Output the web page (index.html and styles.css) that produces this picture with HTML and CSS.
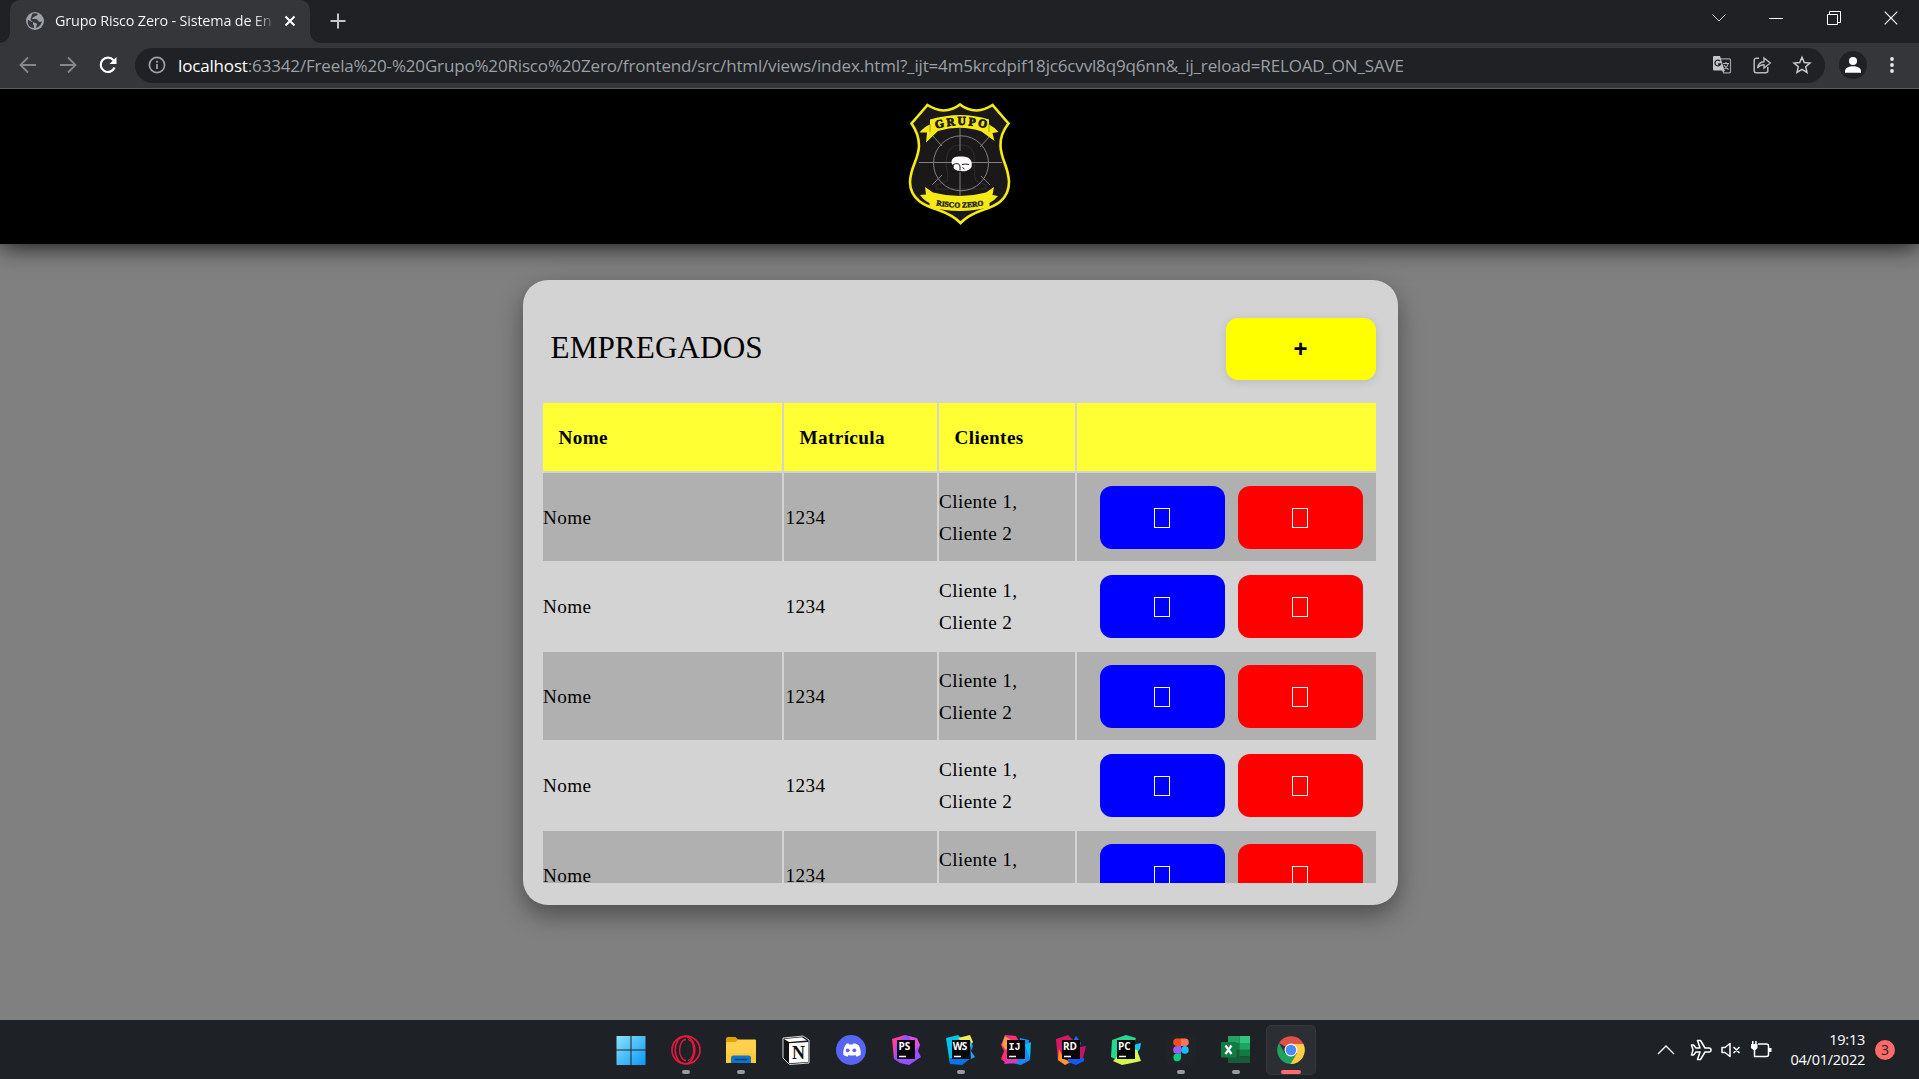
FILE: index.html
```html
<!DOCTYPE html>
<html lang="pt-BR">
<head>
<meta charset="utf-8">
<title>Grupo Risco Zero - Sistema de Empregados</title>
<link rel="stylesheet" href="styles.css">
</head>
<body>
<div class="screen">
  <div class="tabstrip">
    <div class="tab">
      <svg class="globe" width="18" height="18" viewBox="0 0 18 18"><circle cx="9" cy="9" r="9" fill="#9aa0a6"/><path d="M2 8c2 0 2 2 5 2v2c0 1 1 1 1 2v2C4 16 1 13 2 8zM6 2c2-1 4-1 6 0-1 1-1 2-3 2-1 2-3 1-3 3h4c2 0 2 3 4 3 1 0 2-1 2-1-1 4-3 6-6 7 0-2 1-2 1-4-1-2-5-1-6-4C4 6 6 5 6 2z" fill="#35363a"/></svg>
      <span class="tab-title">Grupo Risco Zero - Sistema de En</span>
      <svg class="tab-close" width="12" height="12" viewBox="0 0 12 12"><path d="M1.5 1.5l9 9M10.500 1.500l-9 9" stroke="#fff" stroke-width="2"/></svg>
    </div>
    <svg class="new-tab" width="16" height="16" viewBox="0 0 16 16"><path d="M8 .5v15M.5 8h15" stroke="#c4c7ca" stroke-width="2"/></svg>
    <div class="window-buttons">
      <svg width="14" height="14" viewBox="0 0 14 14"><path d="M.5 3.500l6.500 6.500 6.500-6.500" fill="none" stroke="#d0d0d0"/></svg>
      <svg width="14" height="14" viewBox="0 0 14 14"><path d="M0 7.500h14" stroke="#fff"/></svg>
      <svg width="14" height="14" viewBox="0 0 14 14"><path d="M.5 3.500h10v10h-10zM2.500 3V.5h11v11H11" fill="none" stroke="#fff"/></svg>
      <svg width="14" height="14" viewBox="0 0 14 14"><path d="M.7.7l12.600 12.600M13.300.7L.7 13.300" stroke="#fff" stroke-width="1.200"/></svg>
    </div>
  </div>
  <div class="toolbar">
    <div class="nav">
      <svg width="18" height="18" viewBox="0 0 18 18"><path d="M17 9H2M9 1.500L1.500 9 9 16.500" fill="none" stroke="#85878a" stroke-width="1.800"/></svg>
      <svg width="18" height="18" viewBox="0 0 18 18"><path d="M1 9h15M9 1.500L16.500 9 9 16.500" fill="none" stroke="#85878a" stroke-width="1.800"/></svg>
      <svg width="18" height="18" viewBox="0 0 18 18"><path d="M15.600 11.500A7.200 7.200 0 1 1 14.500 4.200" fill="none" stroke="#fff" stroke-width="2.200"/><path d="M17.500 1v7h-7z" fill="#fff"/></svg>
    </div>
    <div class="omnibox">
      <svg width="18" height="18" viewBox="0 0 18 18"><circle cx="9" cy="9" r="7.600" fill="none" stroke="#9aa0a6" stroke-width="1.700"/><path d="M9 8v5M9 4.800v2" stroke="#9aa0a6" stroke-width="1.800"/></svg>
      <span class="url"><b>localhost</b>:63342/Freela%20-%20Grupo%20Risco%20Zero/frontend/src/html/views/index.html?_ijt=4m5krcdpif18jc6cvvl8q9q6nn&amp;_ij_reload=RELOAD_ON_SAVE</span>
      <div class="page-actions">
        <svg width="20" height="20" viewBox="0 0 20 20"><path d="M8 3.800h9.500a1 1 0 0 1 1 1v12a1 1 0 0 1-1 1H11" fill="none" stroke="#9aa0a6" stroke-width="1.200"/><path d="M2 1h6l4.500 14.500H2a1 1 0 0 1-1-1V2a1 1 0 0 1 1-1z" fill="#c3c5c8"/><path d="M11 18l-1-3h3z" fill="#c3c5c8"/><path d="M8 6A2.900 2.900 0 1 0 8.600 9H6" fill="none" stroke="#202124" stroke-width="1.300"/><path d="M11 8.500h6M14 7v1.500M16 9c-.5 2.500-2 4-3.500 5M12 10c1 2 3 3.500 4.500 4.500" fill="none" stroke="#b7babd" stroke-width="1.100"/></svg>
        <svg width="20" height="20" viewBox="0 0 20 20"><path d="M7 3.200H4.200a2 2 0 0 0-2 2v10.600a2 2 0 0 0 2 2h9.600a2 2 0 0 0 2-2V12" fill="none" stroke="#b7babd" stroke-width="1.500"/><path d="M5.500 13c.5-4 2.700-6 6.500-6.300V3l6.300 5-6.300 5V9.700C9 9.700 7 10.800 5.500 13z" fill="none" stroke="#b7babd" stroke-width="1.400"/></svg>
        <svg width="20" height="20" viewBox="0 0 20 20"><path d="M10 2.300l2.300 5.200 5.700.5-4.300 3.800 1.300 5.600-5-3-5 3 1.300-5.600L2 8l5.700-.5z" fill="none" stroke="#c8cacc" stroke-width="1.500"/></svg>
      </div>
    </div>
    <svg class="avatar" width="28" height="28" viewBox="0 0 28 28"><circle cx="14" cy="14" r="14" fill="#202124"/><circle cx="14" cy="10" r="4" fill="#fff"/><path d="M6 21.800v-1.500c0-3.600 4-5 8-5s8 1.400 8 5v1.500z" fill="#fff"/></svg>
    <svg class="menu" width="4" height="18" viewBox="0 0 4 18"><circle cx="2" cy="3" r="1.900" fill="#e8eaed"/><circle cx="2" cy="9" r="1.900" fill="#e8eaed"/><circle cx="2" cy="15" r="1.900" fill="#e8eaed"/></svg>
  </div>

  <main class="page">
    <header class="site-header">
      <svg class="logo" width="140" height="150" viewBox="0 0 140 150">
        <defs>
          <path id="arc-top" d="M46 39Q71 31 99 39"/>
          <path id="arc-bottom" d="M42 114.500Q70 120.500 98 114.500"/>
        </defs>
        <path d="M37.500 15q8 5 16 5.500Q63 20 70 14.500q7 5.500 16.500 6Q95 20 102.500 15L118.500 33.500Q110 44 110.500 56C111 70 118.500 76 119 92c0 18-14 24-25 27.500-10 3.500-18 7.500-23.500 13.500C65 127 57 123 47 119.500 36 116 20 110 20 92c.5-16 8.500-22 9-36Q29 44 21.500 33.500z" fill="#1a1819" stroke="#f5ea14" stroke-width="2.600"/>
        <path d="M57 91c3-8-3-13 0-25 2-9 8-11 14-11s12 2 13 11c1 10-1 17 2 25l10 4v4H46v-4z" fill="none" stroke="#353435" stroke-width=".8"/>
        <g fill="none" stroke="#8b8b8b" stroke-width=".9"><circle cx="71" cy="73.300" r="27.500"/><path d="M29 72.500h83M70 38v23M70 82v27M42 45l10 11M100 46L90 57M42 95l10-10M100 95l-9-9"/></g>
        <path d="M29.500 42.500q5-6 10.500-8v-5q31-9 59 0v5q6 3 9.500 7.500l-6 1 2 8-13-9.500q-21-7-43.500-.5L36 52.500l1-10z" fill="#f5ea14"/>
        <path d="M40 34v8M99 34v8M40 105v8M99 105v8" stroke="#7c7617" stroke-width=".7"/>
        <path d="M35 97l8 5.500q27 7 53 0l8-5.500-1.500 8 5.500 1q-4 5-8.500 7v4q-30 8-60 0v-4q-5-2-9.500-8l6-.5z" fill="#f5ea14"/>
        <text class="logo-grupo"><textPath href="#arc-top" textLength="51" lengthAdjust="spacing">GRUPO</textPath></text>
        <text class="logo-risco"><textPath href="#arc-bottom" startOffset="4" textLength="48" lengthAdjust="spacingAndGlyphs">RISCO ZERO</textPath></text>
        <path d="M61.500 72c0-3 2-5 5-5.300 5-.6 9-.2 12 1 3 2 3.700 5 3.200 8.500-.5 2.500-3 4-6 4.800q-3 .8-5-.2c-3 .3-6-.8-7.200-2.800l.5-2.500-2-1z" fill="#fff"/>
        <path d="M62.500 75q3-2 6-1.200l1.500 2.200v4M72 74.500q4-1 7 0M72.500 77.500l2 1.500" fill="none" stroke="#1a1819" stroke-width="1"/>
      </svg>
    </header>

    <section class="card">
      <div class="card-head">
        <h1>EMPREGADOS</h1>
        <button class="add">+</button>
      </div>
      <div class="grid">
        <div class="row head"><div>Nome</div><div>Matrícula</div><div>Clientes</div><div></div></div>
        <div class="row"><div>Nome</div><div class="id">1234</div><div>Cliente 1,<br>Cliente 2</div><div class="actions"><button class="edit"><i></i></button><button class="delete"><i></i></button></div></div>
        <div class="row"><div>Nome</div><div class="id">1234</div><div>Cliente 1,<br>Cliente 2</div><div class="actions"><button class="edit"><i></i></button><button class="delete"><i></i></button></div></div>
        <div class="row"><div>Nome</div><div class="id">1234</div><div>Cliente 1,<br>Cliente 2</div><div class="actions"><button class="edit"><i></i></button><button class="delete"><i></i></button></div></div>
        <div class="row"><div>Nome</div><div class="id">1234</div><div>Cliente 1,<br>Cliente 2</div><div class="actions"><button class="edit"><i></i></button><button class="delete"><i></i></button></div></div>
        <div class="row"><div>Nome</div><div class="id">1234</div><div>Cliente 1,<br>Cliente 2</div><div class="actions"><button class="edit"><i></i></button><button class="delete"><i></i></button></div></div>
      </div>
    </section>
  </main>

  <footer class="taskbar">
    <div class="apps">
      <div class="app"><svg viewBox="0 0 30 30"><defs><linearGradient id="win" x2="1" y2="1"><stop stop-color="#8be3fc"/><stop offset="1" stop-color="#0b97f5"/></linearGradient></defs><path d="M.5 1h14v13.500H.5zM15.500 1h14v13.500h-14zM.5 15.500h14V30H.5zM15.500 15.500h14V30h-14z" fill="url(#win)"/></svg></div>
      <div class="app open"><svg viewBox="0 0 30 30"><g fill="none" stroke="#e8173f"><circle cx="15" cy="15" r="14" stroke-width="1.700"/><ellipse cx="14" cy="15" rx="9.800" ry="13.600" stroke-width="1.500"/><path d="M15 4.500C6.500 5 6.500 25 15 25.500" stroke-width="1.300"/><path d="M17 4.500c7 2 8 18 0 21" stroke-width="1.300"/></g></svg></div>
      <div class="app open"><svg viewBox="0 0 30 30"><path d="M0 4a2 2 0 0 1 2-2h7.500l3 3-2 5H0z" fill="#e3a100"/><path d="M0 7h9.500l2.500-2.500h17a1 1 0 0 1 1 1V28H0z" fill="#ffd04c"/><path d="M0 18h30v10H0z" fill="#ffc52f" opacity=".6"/><path d="M5 28v-5a2.500 2.500 0 0 1 2.500-2.500h15A2.500 2.500 0 0 1 25 23v5z" fill="#0c76cb"/><path d="M9 24.500h12" stroke="#073e73" stroke-width="1.300" stroke-linecap="round"/></svg></div>
      <div class="app"><svg viewBox="0 0 30 30"><path d="M2 3L22 1l6 4v23L8.500 29.500 2 23z" fill="#111" stroke="#d9d9d9" stroke-width="1"/><path d="M8 8.300L27.200 7v20L8 28.300z" fill="#fff"/><path d="M3 4L21 2.300 26 5.500 8 7z" fill="#fff"/><text class="notion" x="17.400" y="23.500">N</text></svg></div>
      <div class="app"><svg viewBox="0 0 30 30"><circle cx="15" cy="15" r="15" fill="#5865f2"/><path d="M10.500 8.800l1.800-.5 1 1.300h3.400l1-1.300 1.900.5 3 1.500c2 3 2.400 6.500 2 9.700l-4 1.700-1.200-1.700q-3.400 1-6.800 0l-1.200 1.700-4-1.700c-.4-3.200 0-6.700 2-9.700z" fill="#fff"/><circle cx="11.700" cy="15.300" r="1.900" fill="#5865f2"/><circle cx="18.300" cy="15.300" r="1.900" fill="#5865f2"/></svg></div>
      <div class="app"><svg viewBox="0 0 30 30"><path d="M1 4L14 0 9 20l-6 4z" fill="#ff3fa4"/><path d="M14 0l12 3 3 7-2 6 3 6-12 8-9-2L3 24l2-14z" fill="#9b4dff"/><path d="M18 1l8 3 3 6-5 5z" fill="#e54de0"/><path d="M6 5h18v19H6z" fill="#08050c"/><text class="ide" x="7.500" y="14.700">PS</text><path d="M8 21.500h7" stroke="#fff" stroke-width="1.500"/></svg></div>
      <div class="app open"><svg viewBox="0 0 30 30"><path d="M0 3L12 0l5 5-7 19-6 5z" fill="#08c3e8"/><path d="M12 3L24 0l3 7-4 7z" fill="#f0ee52"/><path d="M24 5l3 6-2 5 4 6-4 2z" fill="#1ba5ef"/><path d="M4 23h21l-9 7-12-1z" fill="#0874ef"/><path d="M6 5h18v19H6z" fill="#05080c"/><text class="ide ws" x="6.800" y="14.700">WS</text><path d="M8 21.500h7" stroke="#fff" stroke-width="1.500"/></svg></div>
      <div class="app"><svg viewBox="0 0 30 30"><path d="M4 0l11 1 3 5L5 28l-5-4 3-8-3-6z" fill="#fb2f71"/><path d="M4 1l7 5-6 9-4-5z" fill="#ff9d46"/><path d="M19 3l9 2 1 20-9 5-14-3 11-6z" fill="#1789f7"/><path d="M24 10l6-3-1 17z" fill="#08bdf1"/><path d="M6 22h12l-2 6-13 1z" fill="#d936ba"/><path d="M6 5h18v19H6z" fill="#090507"/><text class="ide mono" x="7.500" y="14.700">IJ</text><path d="M8 21.500h7" stroke="#fff" stroke-width="1.500"/></svg></div>
      <div class="app"><svg viewBox="0 0 30 30"><path d="M0 4L12 0l5 5-8 19-7 2z" fill="#d91863"/><path d="M17 6l3-5 5 7-2 5z" fill="#1b6ef3"/><path d="M24 12l6-1-3 12-5 1z" fill="#c21570"/><path d="M3 14l5 10 7 3-6 3-7-5z" fill="#ff9634"/><path d="M12 23h16v3l-8 4-8-3z" fill="#1459f3"/><path d="M6 5h18v19H6z" fill="#090507"/><text class="ide" x="7" y="14.700">RD</text><path d="M8 21.500h7" stroke="#fff" stroke-width="1.500"/></svg></div>
      <div class="app"><svg viewBox="0 0 30 30"><path d="M1 5L15 0l10 3-4 13-15 9-6-3z" fill="#25d88b"/><path d="M22 10l8-2-1 6-4 5z" fill="#10c8ed"/><path d="M23 14l3 1 4 11-9 2-10 2-9-4 5-5z" fill="#d8f54b"/><path d="M6 5h18v19H6z" fill="#050907"/><text class="ide" x="7" y="14.700">PC</text><path d="M8 21.500h7" stroke="#fff" stroke-width="1.500"/></svg></div>
      <div class="app open"><svg viewBox="0 0 30 30"><rect width="30" height="30" rx="5" fill="#222326"/><path d="M15 3.500h-4a3.800 3.800 0 0 0 0 7.600h4z" fill="#f24e1e"/><path d="M15 3.500h4a3.800 3.800 0 0 1 0 7.600h-4z" fill="#ff7262"/><path d="M15 11.100h-4a3.800 3.800 0 0 0 0 7.600h4z" fill="#a259ff"/><circle cx="18.900" cy="14.900" r="3.800" fill="#1abcfe"/><path d="M15 18.700h-4a3.800 3.800 0 1 0 4 3.800z" fill="#0acf83"/></svg></div>
      <div class="app open"><svg viewBox="0 0 30 30"><path d="M7 1h11.500v27H7z" fill="#21a366"/><path d="M18.500 1H29v7H18.500z" fill="#33c481"/><path d="M7 8h11.500v7H7z" fill="#107c41"/><path d="M18.500 8H29v7H18.500z" fill="#21a366"/><path d="M7 14.500h11.500V28H7z" fill="#185c37"/><path d="M18.500 14.500H29v7H18.500z" fill="#107c41"/><path d="M18.500 21.500H29V28H18.500z" fill="#185c37"/><rect y="7" width="15.500" height="15.500" rx="1" fill="#107c41"/><path d="M4.500 10.500l6 8.500M10.500 10.500l-6 8.500" stroke="#fff" stroke-width="2.200"/></svg></div>
      <div class="app open active"><svg viewBox="0 0 30 30"><path d="M15 15L3 8A14 14 0 0 1 27.500 9H15z" fill="#de5145"/><path d="M15 15h-1L9 18.500 3 8a14 14 0 0 0 11.500 21l6-10z" fill="#20a15e"/><path d="M15 9h12.500A14 14 0 0 1 14.500 29l6.200-10.500z" fill="#ffce44"/><circle cx="15" cy="15" r="6.500" fill="#f2f2f2"/><circle cx="15" cy="15" r="5.200" fill="#4c8bf5"/></svg></div>
    </div>
    <div class="tray">
      <svg width="18" height="10" viewBox="0 0 18 10"><path d="M1 9l8-8 8 8" fill="none" stroke="#fff" stroke-width="1.300"/></svg>
      <svg class="plane" width="22" height="22" viewBox="0 0 22 22"><path d="M1.500 6h2l2.500 3h4L7.500 1.500h3L15 9h4a2 2 0 0 1 0 4h-4l-4.500 7.500h-3L10 13H6l-2.500 3h-2L3 11z" fill="none" stroke="#fff" stroke-width="1.500" stroke-linejoin="round"/></svg>
      <svg class="mute" width="20" height="16" viewBox="0 0 20 16"><path d="M1 5.500v5h3l5 4v-13l-5 4zM12.500 5l6 6M18.500 5l-6 6" fill="none" stroke="#fff" stroke-width="1.500" stroke-linejoin="round"/></svg>
      <svg class="battery" width="21" height="18" viewBox="0 0 21 18"><path d="M7 3h8.500a2 2 0 0 1 2 2v8.500a2 2 0 0 1-2 2H3.500V9" fill="none" stroke="#fff" stroke-width="1.500"/><path d="M0 3h6.500v4L4.500 9h-2L0 7zM1 0h1.500v3H1zM4.200 0h1.500v3H4.200zM18 7h2.500v4H18z" fill="#fff"/></svg>
      <div class="clock"><span>19:13</span><span>04/01/2022</span></div>
      <div class="badge">3</div>
    </div>
  </footer>
</div>
</body>
</html>
```
FILE: styles.css
```css
* { box-sizing: border-box; }
body { margin: 0; background: #808080; font-family: "Liberation Serif", serif; overflow: hidden; }
svg { display: block; flex: none; }
button { border: 0; padding: 0; }
.screen { width: 1919px; height: 1079px; display: flex; flex-direction: column; }

/* Browser window */
.tabstrip { height: 43px; flex: none; background: #202124; display: flex; align-items: flex-start; padding-left: 10px; font-family: "Open Sans", sans-serif; }
.tab { position: relative; width: 300px; height: 43px; background: #35363a; border-radius: 10px 10px 0 0; display: flex; align-items: center; padding: 0 14px 2px 16px; }
.tab::before, .tab::after { content: ""; position: absolute; bottom: 0; width: 10px; height: 10px; }
.tab::before { left: -10px; background: radial-gradient(circle at 0 0, #202124 9.5px, #35363a 10px); }
.tab::after { right: -10px; background: radial-gradient(circle at 100% 0, #202124 9.5px, #35363a 10px); }
.tab-title { width: 220px; margin-left: 11px; font-size: 14.4px; letter-spacing: -0.18px; white-space: nowrap; overflow: hidden; background: linear-gradient(90deg, #fff 198px, transparent 222px); -webkit-background-clip: text; background-clip: text; color: transparent; }
.tab-close { margin-left: auto; }
.new-tab { margin: 13px 0 0 20px; }
.window-buttons { margin: 11px 21px 0 auto; display: flex; gap: 43.5px; }
.toolbar { height: 46px; flex: none; background: #35363a; border-bottom: 1px solid #5b5c5f; display: flex; align-items: center; padding: 0 25px 1px 19px; }
.nav { display: flex; gap: 22px; }
.omnibox { height: 35px; width: 1690px; margin-left: 18px; border-radius: 18px; background: #202124; display: flex; align-items: center; padding: 0 13px; font-family: "Open Sans", sans-serif; }
.url { margin-left: 12px; font-size: 17px; letter-spacing: -0.16px; color: #9aa0a6; white-space: nowrap; }
.url b { font-weight: 400; color: #fff; }
.page-actions { margin-left: auto; display: flex; gap: 20px; }
.avatar { margin-left: 14px; }
.menu { margin-left: auto; }

/* Page */
.page { flex: 1; min-height: 0; overflow: hidden; background: #808080; display: flex; flex-direction: column; align-items: center; }
.site-header { width: 100%; height: 155px; flex: none; background: #000; display: flex; justify-content: center; padding-top: 1px; box-shadow: 0 0 25px #000; }
.logo-grupo { font: 900 11.5px "Liberation Serif", serif; stroke: #1a1819; stroke-width: .8px; fill: #1a1819; }
.logo-risco { font: 900 7.5px "Liberation Serif", serif; fill: #1a1819; stroke: #1a1819; stroke-width: .4px; }
.card { width: 875px; height: 625px; margin: 36.300px 0 0 1px; border-radius: 25px; background: #d3d3d3; box-shadow: 0 10px 25px rgba(0, 0, 0, .4); padding: 38px 22px 22px 20px; display: flex; flex-direction: column; }
.card-head { height: 85px; flex: none; display: flex; justify-content: space-between; align-items: flex-start; padding-left: 8px; }
.card-head h1 { margin: 12px 0 0; font-size: 31.200px; line-height: 36px; letter-spacing: .08px; font-weight: 400; color: #000; }
.add { width: 150px; height: 62px; border-radius: 12px; background: #ff0; box-shadow: 0 2px 10px rgba(0, 0, 0, .12); font: 700 24px/62px "Liberation Sans", sans-serif; color: #000; }
.grid { flex: 1; min-height: 0; overflow: hidden; display: flex; flex-direction: column; gap: 2px; font-size: 19.200px; letter-spacing: .38px; line-height: 32px; color: #000; }
.row { display: grid; grid-template-columns: 239px 153px 136px 299px; gap: 2px; height: 87.500px; flex: none; }
.row > div { display: flex; align-items: center; padding: 1px 0 0 .6px; }
.row:nth-child(even) > div { background: #b0b0b0; }
.row > .id { padding-left: 2px; }
.row.head { height: 68px; font-weight: 700; }
.row.head > div { background: #ffff33; padding-left: 16px; }
.row > .actions { justify-content: flex-end; gap: 13px; padding: 0 13px 0 0; }
.actions button { width: 125px; height: 63px; border-radius: 12px; display: flex; align-items: center; justify-content: center; padding: 1px 0 0; }
.edit { background: #00f; }
.delete { background: #f00; }
.actions i { width: 16px; height: 20px; border: 1px solid #fff; }

/* Taskbar */
.taskbar { height: 59px; flex: none; background: #1e2227; display: grid; grid-template-columns: 606px 1fr auto; align-items: center; font-family: "Open Sans", sans-serif; }
.apps { grid-column: 2; display: flex; gap: 5px; }
.app { position: relative; width: 50px; height: 50px; border-radius: 5px; display: flex; align-items: center; justify-content: center; }
.app svg { width: 30px; height: 30px; }
.app.open::after { content: ""; position: absolute; left: 21px; bottom: 1px; width: 8px; height: 4px; border-radius: 2px; background: #9a9b9d; }
.app.active { background: #2b2f34; border: 1px solid #34383c; }
.app.active::after { left: 14px; bottom: 0; width: 20px; background: #ff6b68; }
.ide { font: 700 10px "Open Sans", sans-serif; fill: #fff; }
.ide.mono { font: 700 10px "Liberation Mono", monospace; }
.ws { letter-spacing: -.6px; }
.notion { font: 700 18px "Liberation Serif", serif; text-anchor: middle; fill: #111; }
.tray { display: flex; align-items: center; padding-right: 24px; color: #fff; }
.plane { margin-left: 15px; }
.mute { margin-left: 9px; }
.battery { margin-left: 10px; }
.clock { width: 93px; display: flex; flex-direction: column; align-items: flex-end; font-size: 14.500px; line-height: 20px; letter-spacing: -.25px; white-space: nowrap; }
.badge { width: 20px; height: 20px; margin-left: 10px; border-radius: 50%; background: #ff6b68; color: #1e2227; font-size: 14px; line-height: 20px; text-align: center; }
```
